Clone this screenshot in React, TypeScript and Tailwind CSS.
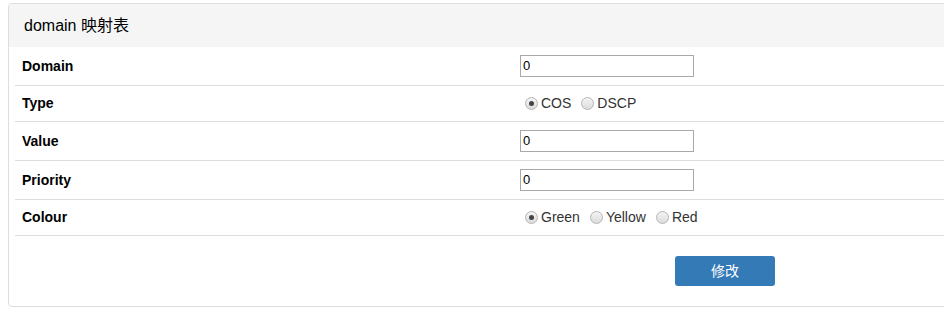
import React from "react";

const font = { fontFamily: '"Liberation Sans", Arial, "Noto Sans CJK SC", sans-serif' };

function Radio({ checked, label }: { checked?: boolean; label: string }) {
  return (
    <label className="flex items-center mr-[5px]">
      <span className="w-[13px] h-[13px] rounded-full border border-[#b5b5b5] bg-gradient-to-b from-[#f4f4f4] to-[#dcdcdc] flex items-center justify-center ml-[5px] mr-[3px]">
        {checked && <span className="w-[5px] h-[5px] rounded-full bg-[#444]" />}
      </span>
      <span>{label}</span>
    </label>
  );
}

function Input() {
  return (
    <div className="w-[174px] h-[22px] border border-[#a9a9a9] bg-white flex items-center pl-[2px] text-[13px] text-black">
      0
    </div>
  );
}

export default function App() {
  const rows: { label: string; h: string; content: React.ReactNode }[] = [
    { label: "Domain", h: "h-[39px]", content: <Input /> },
    {
      label: "Type",
      h: "h-[36px]",
      content: (
        <div className="flex items-center">
          <Radio checked label="COS" />
          <Radio label="DSCP" />
        </div>
      ),
    },
    { label: "Value", h: "h-[39px]", content: <Input /> },
    { label: "Priority", h: "h-[39px]", content: <Input /> },
    {
      label: "Colour",
      h: "h-[36px]",
      content: (
        <div className="flex items-center">
          <Radio checked label="Green" />
          <Radio label="Yellow" />
          <Radio label="Red" />
        </div>
      ),
    },
  ];
  return (
    <div className="w-[944px] h-[309px] overflow-hidden bg-white text-[#333]" style={font}>
      <div className="ml-[8px] mt-[3px] w-[1000px] h-[304px] border border-[#ddd] rounded-[4px] flex flex-col">
        <div className="h-[43px] bg-[#f5f5f5] flex items-center pl-[15px] text-[16px] text-black rounded-t-[4px]">
          domain 映射表
        </div>
        <div className="ml-[6px]">
          {rows.map((r) => (
            <div key={r.label} className={`flex items-center border-b border-[#ddd] ${r.h}`}>
              <div className="w-[497px] pl-[7px] font-bold text-[14px] text-black">{r.label}</div>
              <div className="pl-[8px] text-[14px] text-[#333]">{r.content}</div>
            </div>
          ))}
          <div className="flex pl-[660px] pt-[20px]">
            <button className="w-[100px] h-[30px] bg-[#337ab7] text-white text-[14px] rounded-[3px]">
              修改
            </button>
          </div>
        </div>
      </div>
    </div>
  );
}
